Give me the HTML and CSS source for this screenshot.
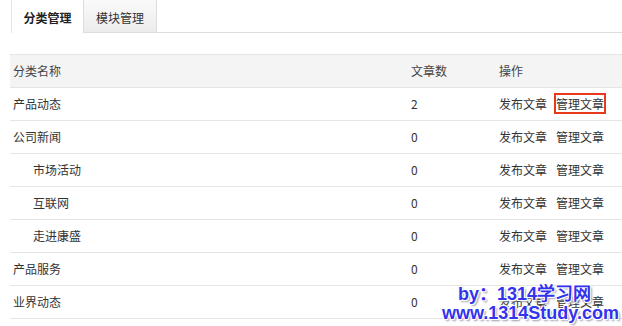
FILE: index.html
```html
<!DOCTYPE html>
<html lang="zh-CN">
<head>
  <meta charset="UTF-8">
  <title>分类管理</title>
  <link rel="stylesheet" href="styles.css">
</head>
<body>
<div class="tabs">
  <span class="tab active">分类管理</span>
  <span class="tab">模块管理</span>
  <span class="tab-rest"></span>
</div>

<table class="list">
  <tr class="head">
    <td class="c-name">分类名称</td>
    <td class="c-num">文章数</td>
    <td class="c-op">操作</td>
  </tr>
  <tr>
    <td class="c-name">产品动态</td>
    <td class="c-num">2</td>
    <td class="c-op"><a href="#">发布文章</a><a href="#" class="mark">管理文章</a></td>
  </tr>
  <tr>
    <td class="c-name">公司新闻</td>
    <td class="c-num">0</td>
    <td class="c-op"><a href="#">发布文章</a><a href="#">管理文章</a></td>
  </tr>
  <tr>
    <td class="c-name sub">市场活动</td>
    <td class="c-num">0</td>
    <td class="c-op"><a href="#">发布文章</a><a href="#">管理文章</a></td>
  </tr>
  <tr>
    <td class="c-name sub">互联网</td>
    <td class="c-num">0</td>
    <td class="c-op"><a href="#">发布文章</a><a href="#">管理文章</a></td>
  </tr>
  <tr>
    <td class="c-name sub">走进康盛</td>
    <td class="c-num">0</td>
    <td class="c-op"><a href="#">发布文章</a><a href="#">管理文章</a></td>
  </tr>
  <tr>
    <td class="c-name">产品服务</td>
    <td class="c-num">0</td>
    <td class="c-op"><a href="#">发布文章</a><a href="#">管理文章</a></td>
  </tr>
  <tr>
    <td class="c-name">业界动态</td>
    <td class="c-num">0</td>
    <td class="c-op"><a href="#">发布文章</a><a href="#">管理文章</a></td>
  </tr>
</table>

<div class="watermark">
  <div class="wm-by">by：1314学习网</div>
  <div>www.1314Study.com</div>
</div>
</body>
</html>
```

FILE: styles.css
```css
body {
  margin: 0;
  font-family: "Noto Sans CJK SC", "Liberation Sans", sans-serif;
  font-size: 12px;
  line-height: 18px;
  color: #333;
  background: #fff;
  position: relative;
  height: 326px;
  overflow: hidden;
}

.tabs {
  display: flex;
  height: 33px;
  padding-left: 11px;
}

.tab {
  width: 73px;
  height: 33px;
  line-height: 36px;
  text-align: center;
  box-sizing: border-box;
  border-bottom: 1px solid #ddd;
  border-right: 1px solid #ddd;
  background: linear-gradient(#fafafa, #ececec);
  color: #333;
}

.tab.active {
  font-weight: bold;
  background: #fff;
  border-left: 1px solid #e4e4e4;
  border-bottom: none;
  color: #222;
}

.tab-rest {
  flex: 1;
  border-bottom: 1px solid #ddd;
}

.list {
  margin: 21px 0 0 10px;
  width: 612px;
  table-layout: fixed;
  border-collapse: collapse;
  border-top: 1px solid #e6e6e1;
}

.list td {
  height: 33px;
  padding: 0 0 0 3px;
  border-bottom: 1px solid #e6e6e1;
  white-space: nowrap;
  box-sizing: border-box;
}

.list .head td {
  background: #f4f4f4;
  color: #444;
}

.c-name { width: 398px; }
.c-name.sub { padding-left: 23px; }
.c-num { width: 88px; }
.c-op { width: 126px; }

.c-op a {
  color: #333;
  text-decoration: none;
  margin-right: 9px;
}

.c-op a.mark {
  outline: 2px solid #e8391b;
}

.watermark {
  position: absolute;
  right: 3px;
  bottom: 3px;
  font-family: "Liberation Sans", sans-serif;
  font-weight: bold;
  font-size: 18px;
  line-height: 19px;
  color: #3333ee;
  text-shadow: 1px 1px 0 #fff, -1px -1px 0 #fff, 1px -1px 0 #fff, -1px 1px 0 #fff, 2px 2px 2px #99a;
}

.wm-by {
  padding-left: 16px;
}
```
